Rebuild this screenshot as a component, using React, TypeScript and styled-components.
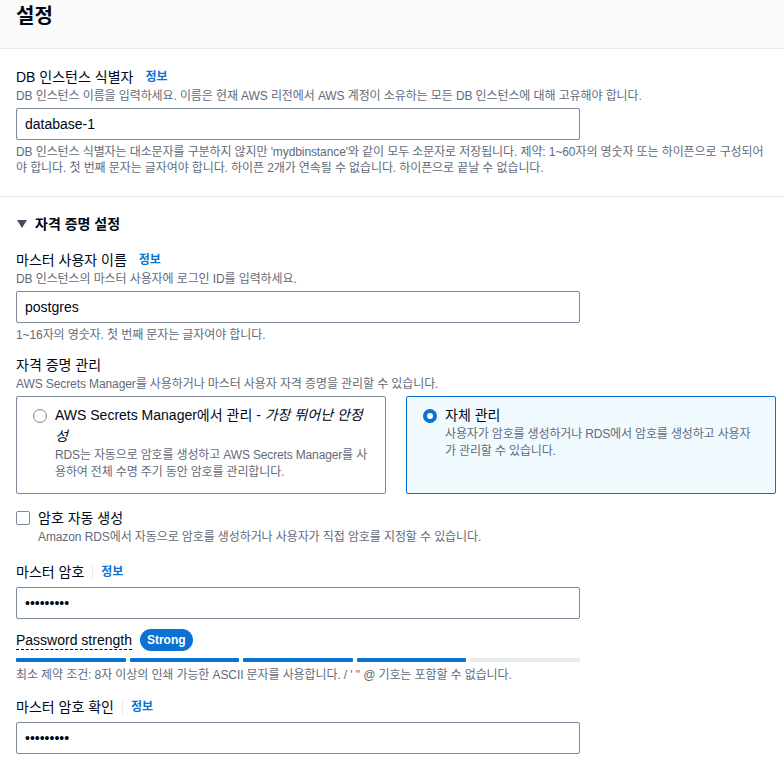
import React from 'react';
import styled, { createGlobalStyle } from 'styled-components';

const GlobalStyle = createGlobalStyle`
  html, body {
    margin: 0;
    padding: 0;
    background: #ffffff;
  }
  body {
    font-family: "Liberation Sans", "Noto Sans CJK KR", sans-serif;
    color: #000716;
    -webkit-font-smoothing: antialiased;
  }
`;

const Page = styled.div`
  width: 784px;
  min-height: 766px;
  background: #ffffff;
`;

const Header = styled.div`
  height: 49px;
  padding: 4px 16px 0;
  box-sizing: border-box;
  background: #fafafa;
  border-bottom: 1px solid #e9ebed;
`;

const Title = styled.h2`
  margin: 0;
  font-size: 20px;
  line-height: 24px;
  font-weight: 700;
`;

const Section = styled.div<{ $last?: boolean }>`
  padding: ${(p) => (p.$last ? '16px 8px 14px 16px' : '17px 12px 20px 16px')};
  border-bottom: ${(p) => (p.$last ? 'none' : '1px solid #e9ebed')};
  display: flex;
  flex-direction: column;
`;

const Field = styled.div<{ $gap?: number }>`
  display: flex;
  flex-direction: column;
  margin-top: ${(p) => p.$gap ?? 0}px;
`;

const LabelRow = styled.div`
  display: flex;
  align-items: center;
  font-size: 14px;
  line-height: 22px;
`;

const Info = styled.a<{ $divided?: boolean }>`
  color: #0972d3;
  font-size: 12px;
  font-weight: 700;
  text-decoration: none;
  margin-left: ${(p) => (p.$divided ? '8px' : '12px')};
  padding-left: ${(p) => (p.$divided ? '8px' : '0')};
  border-left: ${(p) => (p.$divided ? '1px solid #e9ebed' : 'none')};
  line-height: 16px;
`;

const Desc = styled.div`
  font-size: 12px;
  line-height: 16px;
  color: #5f6b7a;
  letter-spacing: -0.1px;
`;

const Input = styled.input`
  width: 564px;
  height: 32px;
  box-sizing: border-box;
  margin: 4px 0;
  padding: 0 8px;
  border: 1px solid #7d8998;
  border-radius: 2px;
  font-family: inherit;
  font-size: 14px;
  color: #000716;
  background: #ffffff;
  outline: none;
`;

const ExpandHeader = styled.div`
  display: flex;
  align-items: center;
  gap: 8px;
  font-size: 14px;
  line-height: 22px;
  font-weight: 700;
  padding-left: 1px;
`;

const Tiles = styled.div`
  display: grid;
  grid-template-columns: 370px 370px;
  gap: 20px;
  margin-top: 4px;
`;

const Tile = styled.div<{ $selected?: boolean }>`
  display: flex;
  gap: 8px;
  padding: 8px 16px 12px;
  border: 1px solid ${(p) => (p.$selected ? '#0972d3' : '#7d8998')};
  border-radius: 2px;
  background: ${(p) => (p.$selected ? '#f1faff' : '#ffffff')};
  min-height: 98px;
  box-sizing: border-box;
`;

const Radio = styled.span<{ $checked?: boolean }>`
  flex: none;
  width: 14px;
  height: 14px;
  margin-top: 4px;
  border-radius: 50%;
  box-sizing: border-box;
  border: ${(p) => (p.$checked ? '4px solid #0972d3' : '1.5px solid #7d8998')};
  background: #ffffff;
`;

const TileBody = styled.div`
  display: flex;
  flex-direction: column;
`;

const TileTitle = styled.div`
  font-size: 14px;
  line-height: 21px;
  em {
    font-style: italic;
  }
`;

const TileDesc = styled.div`
  font-size: 12px;
  line-height: 17px;
  color: #5f6b7a;
  letter-spacing: -0.15px;
`;

const CheckRow = styled.div`
  display: flex;
  gap: 8px;
  margin-top: 13px;
`;

const Checkbox = styled.span`
  flex: none;
  width: 14px;
  height: 14px;
  margin-top: 4px;
  border: 1px solid #7d8998;
  border-radius: 2px;
  box-sizing: border-box;
`;

const StrengthRow = styled.div`
  display: flex;
  align-items: center;
  gap: 8px;
  height: 22px;
  margin-top: 6px;
`;

const StrengthLabel = styled.span`
  font-size: 14px;
  line-height: 18px;
  border-bottom: 1px dashed #000716;
`;

const Badge = styled.span`
  display: inline-flex;
  align-items: center;
  height: 22px;
  padding: 0 7px;
  border-radius: 11px;
  background: #0972d3;
  color: #ffffff;
  font-size: 12px;
  font-weight: 700;
`;

const Bars = styled.div`
  display: grid;
  grid-template-columns: repeat(5, 1fr);
  gap: 4px;
  width: 564px;
  margin: 7px 0 5px;
`;

const Bar = styled.div<{ $on?: boolean }>`
  height: 4px;
  border-radius: 1px;
  background: ${(p) => (p.$on ? '#0972d3' : '#e9ebed')};
`;

const Caret = () => (
  <svg width="10" height="8" viewBox="0 0 10 8">
    <path d="M0 0 H10 L5 8 Z" fill="#414d5c" />
  </svg>
);

export default function App() {
  const strength = 4;
  return (
    <Page>
      <GlobalStyle />
      <Header>
        <Title>설정</Title>
      </Header>

      <Section>
        <Field>
          <LabelRow>
            DB 인스턴스 식별자<Info>정보</Info>
          </LabelRow>
          <Desc>DB 인스턴스 이름을 입력하세요. 이름은 현재 AWS 리전에서 AWS 계정이 소유하는 모든 DB 인스턴스에 대해 고유해야 합니다.</Desc>
          <Input readOnly value="database-1" />
          <Desc>
            DB 인스턴스 식별자는 대소문자를 구분하지 않지만 'mydbinstance'와 같이 모두 소문자로 저장됩니다. 제약: 1~60자의 영숫자 또는 하이픈으로 구성되어야 합니다. 첫 번째 문자는 글자여야 합니다. 하이픈 2개가 연속될 수 없습니다. 하이픈으로 끝날 수 없습니다.
          </Desc>
        </Field>
      </Section>

      <Section $last>
        <ExpandHeader>
          <Caret />
          자격 증명 설정
        </ExpandHeader>

        <Field $gap={14}>
          <LabelRow>
            마스터 사용자 이름<Info>정보</Info>
          </LabelRow>
          <Desc>DB 인스턴스의 마스터 사용자에 로그인 ID를 입력하세요.</Desc>
          <Input readOnly value="postgres" />
          <Desc>1~16자의 영숫자. 첫 번째 문자는 글자여야 합니다.</Desc>
        </Field>

        <Field $gap={11}>
          <LabelRow>자격 증명 관리</LabelRow>
          <Desc>AWS Secrets Manager를 사용하거나 마스터 사용자 자격 증명을 관리할 수 있습니다.</Desc>
          <Tiles>
            <Tile>
              <Radio />
              <TileBody>
                <TileTitle>
                  AWS Secrets Manager에서 관리 - <em>가장 뛰어난 안정성</em>
                </TileTitle>
                <TileDesc>RDS는 자동으로 암호를 생성하고 AWS Secrets Manager를 사용하여 전체 수명 주기 동안 암호를 관리합니다.</TileDesc>
              </TileBody>
            </Tile>
            <Tile $selected>
              <Radio $checked />
              <TileBody>
                <TileTitle>자체 관리</TileTitle>
                <TileDesc>사용자가 암호를 생성하거나 RDS에서 암호를 생성하고 사용자가 관리할 수 있습니다.</TileDesc>
              </TileBody>
            </Tile>
          </Tiles>
        </Field>

        <CheckRow>
          <Checkbox />
          <TileBody>
            <LabelRow>암호 자동 생성</LabelRow>
            <Desc>Amazon RDS에서 자동으로 암호를 생성하거나 사용자가 직접 암호를 지정할 수 있습니다.</Desc>
          </TileBody>
        </CheckRow>

        <Field $gap={16}>
          <LabelRow>
            마스터 암호<Info $divided>정보</Info>
          </LabelRow>
          <Input readOnly value="•••••••••" />
          <StrengthRow>
            <StrengthLabel>Password strength</StrengthLabel>
            <Badge>Strong</Badge>
          </StrengthRow>
          <Bars>
            {[0, 1, 2, 3, 4].map((i) => (
              <Bar key={i} $on={i < strength} />
            ))}
          </Bars>
          <Desc>최소 제약 조건: 8자 이상의 인쇄 가능한 ASCII 문자를 사용합니다. / ' " @ 기호는 포함할 수 없습니다.</Desc>
        </Field>

        <Field $gap={13}>
          <LabelRow>
            마스터 암호 확인<Info $divided>정보</Info>
          </LabelRow>
          <Input readOnly value="•••••••••" />
        </Field>
      </Section>
    </Page>
  );
}
